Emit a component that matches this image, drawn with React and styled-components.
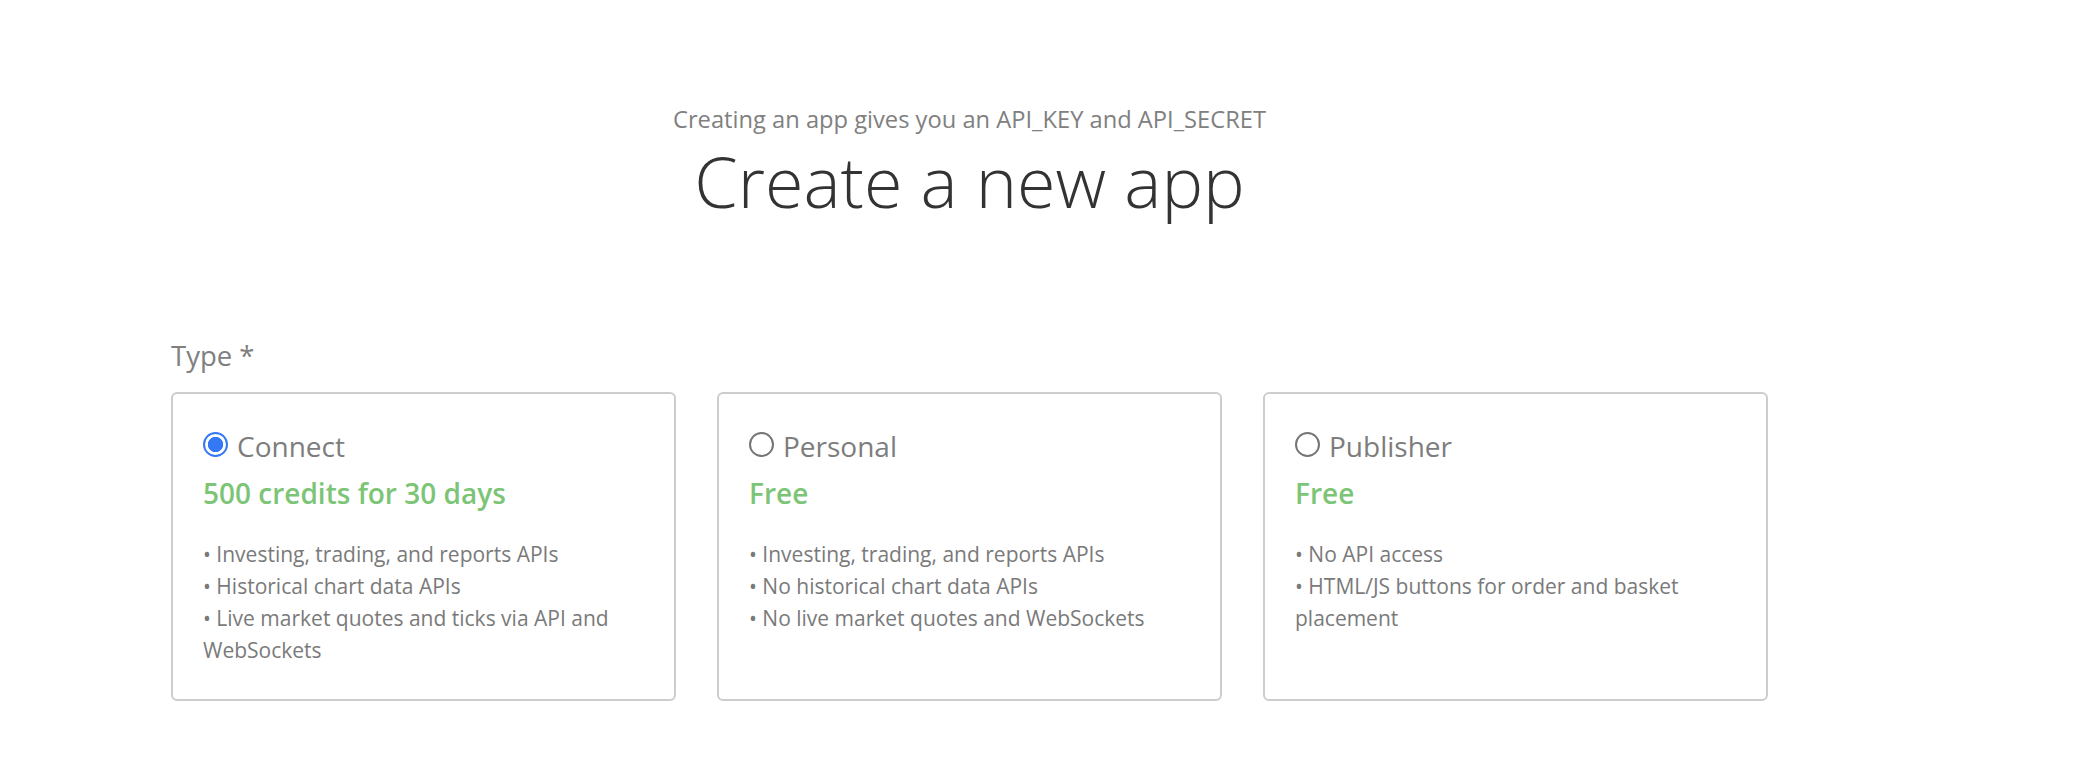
import React, { useState } from "react";
import styled, { createGlobalStyle } from "styled-components";

const GlobalStyle = createGlobalStyle`
  body {
    margin: 0;
    background: #fff;
    font-family: "Open Sans", "Noto Sans", sans-serif;
  }
`;

const Page = styled.div`
  width: 1597px;
  margin-left: 171px;
  padding-top: 104px;
`;

const Header = styled.header`
  text-align: center;
`;

const Subtitle = styled.p`
  margin: 0;
  font-size: 23.7px;
  line-height: 30px;
  color: #808080;
`;

const Title = styled.h1`
  margin: 5px 0 0;
  font-size: 70px;
  line-height: 84px;
  font-weight: 300;
  color: #333;
`;

const Label = styled.div`
  margin-top: 115px;
  font-size: 27.5px;
  line-height: 36px;
  color: #808080;
`;

const Cards = styled.div`
  display: grid;
  grid-template-columns: repeat(3, 505px);
  gap: 41px;
  margin-top: 18px;
`;

const Card = styled.div`
  box-sizing: border-box;
  border: 2px solid #cdcdcd;
  border-radius: 6px;
  padding: 32px 30px 33px;
  cursor: pointer;
`;

const Head = styled.div`
  display: flex;
  align-items: center;
  gap: 9px;
`;

const Radio = styled.input.attrs({ type: "radio" })`
  appearance: none;
  box-sizing: border-box;
  margin: -3px 0 0;
  width: 25px;
  height: 25px;
  border-radius: 50%;
  border: 2px solid #757575;
  background: #fff;
  flex: none;

  &:checked {
    border: 2.5px solid #3478f6;
    background: radial-gradient(circle, #3478f6 0 7.4px, #fff 7.9px);
  }
`;

const Name = styled.span`
  font-size: 28px;
  line-height: 40px;
  color: #7d7d7d;
`;

const Price = styled.div`
  margin-top: 7px;
  font-size: 28px;
  line-height: 40px;
  font-weight: 600;
  color: #7cc576;
`;

const Features = styled.ul`
  list-style: none;
  margin: 25px 0 0;
  padding: 0;
`;

const Feature = styled.li`
  font-size: 21px;
  line-height: 32px;
  color: #7a7a7a;
`;

const types = [
  {
    id: "connect",
    name: "Connect",
    price: "500 credits for 30 days",
    features: [
      "Investing, trading, and reports APIs",
      "Historical chart data APIs",
      "Live market quotes and ticks via API and WebSockets",
    ],
  },
  {
    id: "personal",
    name: "Personal",
    price: "Free",
    features: [
      "Investing, trading, and reports APIs",
      "No historical chart data APIs",
      "No live market quotes and WebSockets",
    ],
  },
  {
    id: "publisher",
    name: "Publisher",
    price: "Free",
    features: ["No API access", "HTML/JS buttons for order and basket placement"],
  },
];

const App = () => {
  const [selected, setSelected] = useState("connect");

  return (
    <Page>
      <GlobalStyle />
      <Header>
        <Subtitle>Creating an app gives you an API_KEY and API_SECRET</Subtitle>
        <Title>Create a new app</Title>
      </Header>
      <Label>Type *</Label>
      <Cards>
        {types.map((t) => (
          <Card key={t.id} onClick={() => setSelected(t.id)}>
            <Head>
              <Radio
                name="type"
                value={t.id}
                checked={selected === t.id}
                onChange={() => setSelected(t.id)}
              />
              <Name>{t.name}</Name>
            </Head>
            <Price>{t.price}</Price>
            <Features>
              {t.features.map((f) => (
                <Feature key={f}>• {f}</Feature>
              ))}
            </Features>
          </Card>
        ))}
      </Cards>
    </Page>
  );
};

export default App;
